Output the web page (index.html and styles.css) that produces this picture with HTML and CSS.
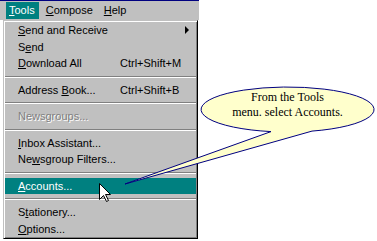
FILE: index.html
```html
<!DOCTYPE html>
<html lang="en">
<head>
  <meta charset="UTF-8">
  <title>Tools menu - Accounts</title>
  <link rel="stylesheet" href="styles.css">
</head>
<body>
  <div class="screen">
    <div class="menubar">
      <span class="menubar-item active"><u>T</u>ools</span>
      <span class="menubar-item"><u>C</u>ompose</span>
      <span class="menubar-item"><u>H</u>elp</span>
    </div>

    <div class="menu">
      <div class="menu-item"><span><u>S</u>end and Receive</span><span></span><span class="submenu-arrow"></span></div>
      <div class="menu-item"><span>S<u>e</u>nd</span></div>
      <div class="menu-item"><span><u>D</u>ownload All</span><span>Ctrl+Shift+M</span></div>
      <div class="separator"></div>
      <div class="menu-item"><span>Address <u>B</u>ook...</span><span>Ctrl+Shift+B</span></div>
      <div class="separator"></div>
      <div class="menu-item disabled"><span>Newsgroups...</span></div>
      <div class="separator"></div>
      <div class="menu-item"><span><u>I</u>nbox Assistant...</span></div>
      <div class="menu-item"><span>Ne<u>w</u>sgroup Filters...</span></div>
      <div class="separator"></div>
      <div class="menu-item selected"><span><u>A</u>ccounts...</span></div>
      <div class="separator"></div>
      <div class="menu-item"><span>S<u>t</u>ationery...</span></div>
      <div class="menu-item"><span><u>O</u>ptions...</span></div>
    </div>

    <!-- callout balloon over the menu -->
    <div class="callout">
      <svg class="callout-shape" width="377" height="241" viewBox="0 0 377 241">
        <path d="M312 131.1 A86.5 22.5 0 1 0 271 131.6 L125 184 Z" fill="#ffffcc" stroke="#000080" stroke-width="1"/>
      </svg>
      <div class="callout-text">From the Tools<br>menu. select Accounts.</div>
    </div>

    <svg class="cursor" width="13" height="20" viewBox="0 0 13 20">
      <path d="M0.5 0.5 L0.5 16.5 L4.5 12.5 L7.5 18.5 L9.5 17.5 L6.5 11.5 L11.5 11.5 Z" fill="#fff" stroke="#000" stroke-width="1"/>
    </svg>
  </div>
</body>
</html>
```

FILE: styles.css
```css
* {
  margin: 0;
  padding: 0;
  box-sizing: border-box;
}

body {
  background: #fff;
  font-family: 'Liberation Sans', Arial, sans-serif;
  font-size: 11px;
  color: #000;
}

.screen {
  position: relative;
  width: 377px;
  height: 241px;
  overflow: hidden;
}

u {
  text-underline-offset: 1px;
}

.menubar {
  display: flex;
  gap: 4px;
  width: 199px;
  height: 20px;
  padding: 1px 0 0 6px;
  background: #c0c0c0;
  border-top: 1px solid #000080;
}

.menubar-item {
  height: 17px;
  line-height: 17px;
  padding: 0 4px 0 3px;
}

.menubar-item.active {
  background: #008080;
  color: #fff;
}

.menu {
  width: 195px;
  margin-left: 3px;
  padding: 1px;
  background: #c0c0c0;
  border: 1px solid;
  border-color: #c0c0c0 #000 #000 #c0c0c0;
  box-shadow: inset 1px 1px #fff, inset -1px -1px #808080;
}

.menu-item {
  display: grid;
  grid-template-columns: 102px 1fr 11px;
  align-items: center;
  height: 16.5px;
  padding-left: 13px;
}

.menu-item.selected {
  background: #008080;
  color: #fff;
}

.menu-item.disabled {
  color: #808080;
  text-shadow: 1px 1px 0 #fff;
}

.submenu-arrow {
  width: 0;
  height: 0;
  border-left: 4px solid #000;
  border-top: 4px solid transparent;
  border-bottom: 4px solid transparent;
}

.separator {
  height: 10px;
  display: flex;
  flex-direction: column;
  justify-content: center;
}

.separator::before,
.separator::after {
  content: '';
  display: block;
  height: 1px;
}

.separator::before {
  background: #808080;
}

.separator::after {
  background: #fff;
}

.callout {
  position: absolute;
  left: 0;
  top: 0;
  width: 377px;
  height: 241px;
}

.callout-shape {
  display: block;
}

.callout-text {
  position: absolute;
  left: 201px;
  top: 90px;
  width: 173px;
  text-align: center;
  font-family: 'Liberation Serif', 'Times New Roman', serif;
  font-size: 12px;
  line-height: 15px;
}

.cursor {
  position: absolute;
  left: 99px;
  top: 183px;
}
```
